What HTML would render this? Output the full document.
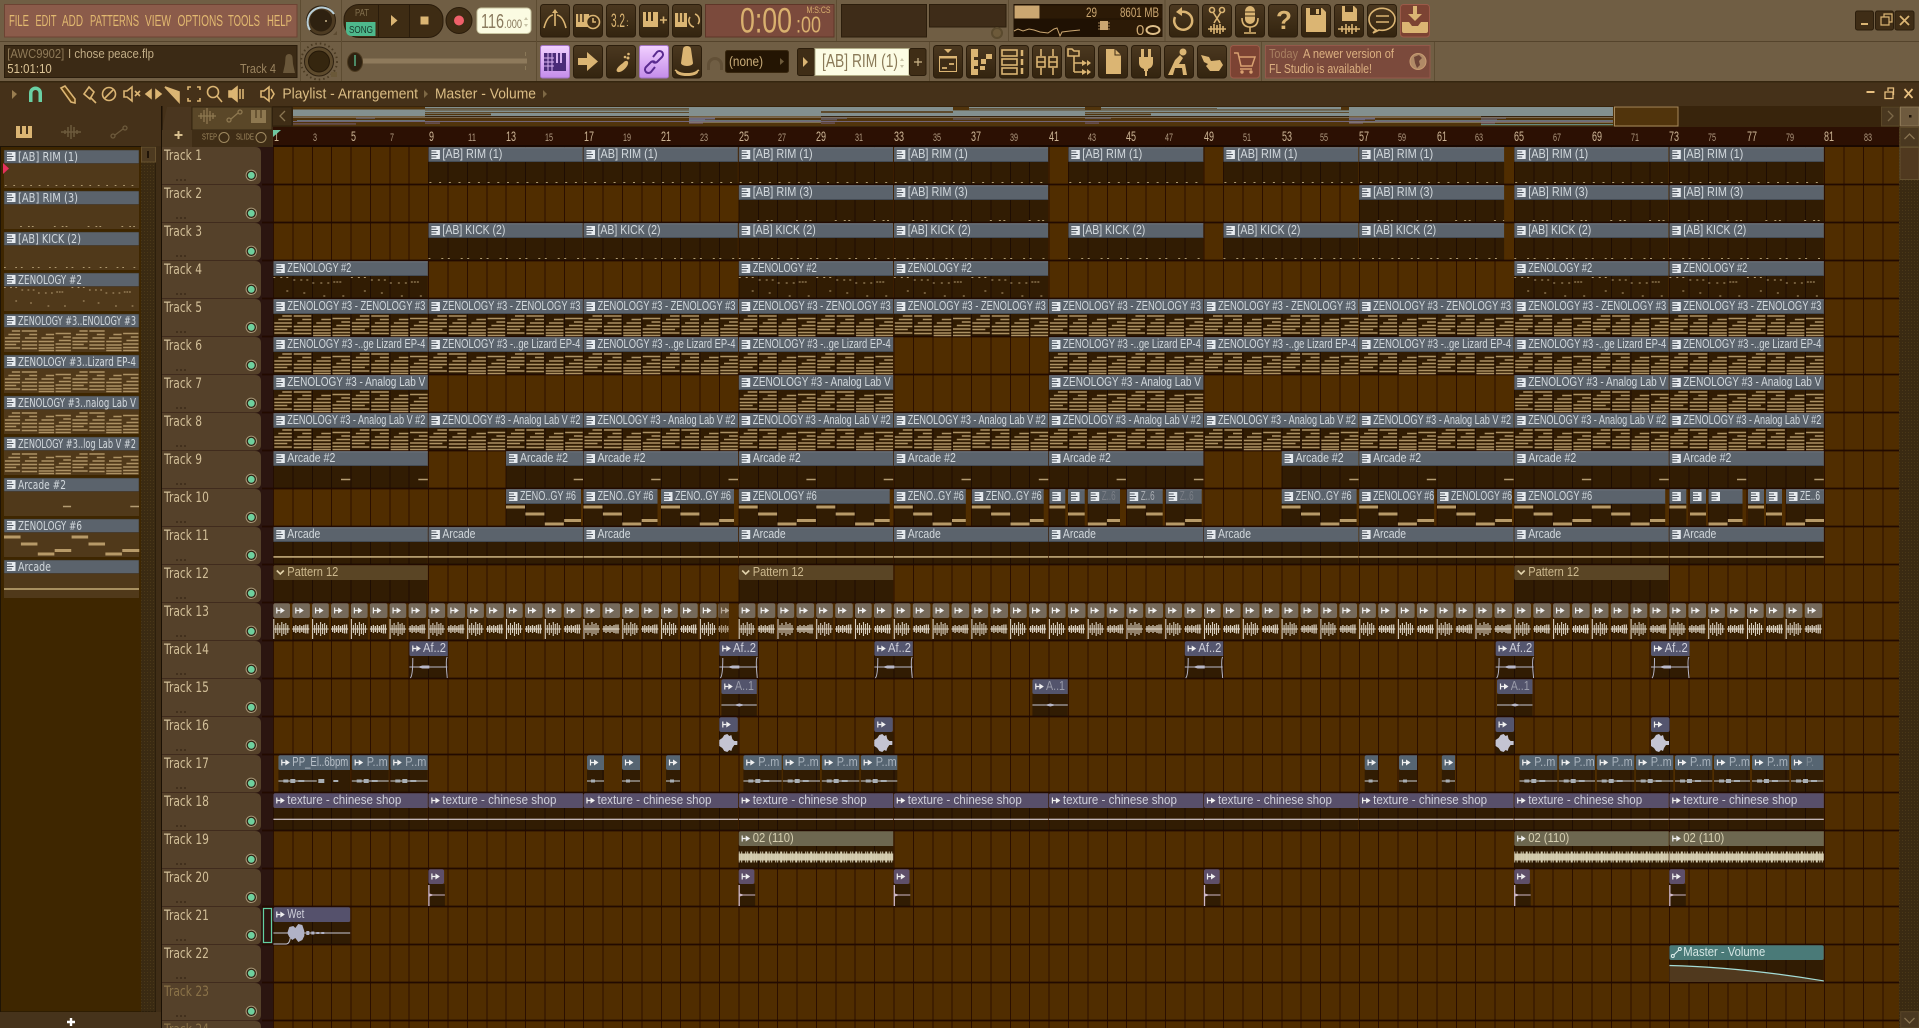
<!DOCTYPE html>
<html><head><meta charset="utf-8"><title>FL Studio - Playlist</title>
<style>
html,body{margin:0;padding:0;background:#3f2700;overflow:hidden}
svg{display:block;font-family:"Liberation Sans",sans-serif}
text{white-space:pre}
.t,.tr{font-family:"DejaVu Sans","Liberation Sans",sans-serif}
.t{font-size:12.500px;fill:#d2d8dc}
.d{fill:#9a9caa}
.p{fill:#cfd0da}
.y{fill:#d6cfb0}
.o{fill:#cdb98e}
.tr{font-size:14.500px;fill:#d2bf98}
.m{font-size:16px;fill:#e2b970}
.rb{font-size:14px;fill:#cdb595}
.rs{font-size:11px;fill:#b09a80}
.i{fill:#dbb573}
.s{fill:none;stroke:#dbb573;stroke-width:1.6}
</style></head><body>
<svg xmlns="http://www.w3.org/2000/svg" width="1919" height="1028" viewBox="0 0 1919 1028">
<defs>
<linearGradient id="bg" x1="0" y1="0" x2="0" y2="1"><stop offset="0" stop-color="#4b3820"/><stop offset="1" stop-color="#33240f"/></linearGradient>
<linearGradient id="gp" x1="0" y1="0" x2="0" y2="1"><stop offset="0" stop-color="#f2d0ff"/><stop offset="1" stop-color="#c48cea"/></linearGradient>
<g id="bt"><rect x=".5" y=".5" width="29" height="32.5" rx="3" fill="url(#bg)" stroke="#2c1e0c"/></g>
<pattern id="tex" width="3" height="3" patternUnits="userSpaceOnUse"><rect width="3" height="3" fill="#3a2a12"/><rect width="1" height="1" fill="#4a3818"/></pattern>
<g id="th"><path d="M162 0H255Q261 0 261 6V32Q261 37.5 255 37.5H162Z" fill="#55412a"/><circle cx="251.3" cy="28.3" r="5.2" fill="#2f2313" stroke="#a89878" stroke-width="1"/><circle cx="251.3" cy="28.3" r="3.4" fill="#6fd09e"/><path d="M176 33h2m2 0h2m2 0h2" stroke="#2e2010" stroke-width="1"/></g>
<g id="pi"><rect x="3" y="3" width="8.5" height="9" fill="#e6eaee"/><path d="M3 5h5M3 7.5h6.5M3 10h5" stroke="#4a525c" stroke-width="1"/></g>
<g id="ai"><path d="M3.5 4.5v6M4 7.5h3" stroke="#f0f0f0" stroke-width="1.2" fill="none"/><path d="M7 4.5l4.5 3-4.5 3z" fill="#f0f0f0"/></g>
<rect id="b" y="15" width="400" height="22" fill="rgba(18,12,6,.5)"/>
<g id="cs"><use href="#b"/><rect y=".3" width="400" height="14.7" rx="2" fill="#5b636c"/><rect y=".3" width="400" height="1" fill="#6e767f"/><rect y="14" width="400" height="1" fill="#454c55"/><use href="#pi"/></g>
<path id="n1" d="M1 35.5H155" stroke="#b09a70" stroke-dasharray="2 7.7"/>
<path id="n2" d="M18.5 35.5H155" stroke="#b09a70" stroke-dasharray="2 7 2 2.5 2 23.28"/>
<path id="n3" d="M0 35.5H155" stroke="#b09a70" stroke-dasharray="2 10.9 2 4.5"/>
<path id="nz" d="M0 16.5h2m5 0h2m4 0h2m5 2.5h2m5 0h2m4 0h2m4 3h2m6 0h2m5 0h2m4-1h2m1 0h2m1 0h2M13 30h2m15 2h2m18 3h2m17 0h2" stroke="#b49c72" fill="none"/>
<g id="n4"><use href="#nz"/><use href="#nz" x="77.55"/></g>
<path id="ns" d="M9 17H18.5M5 20.500H18.5M1 24H18.500M1 27.500H18.500M1 30.500H14M1 34H18.500M20.400 17H38M29 20.500H38M24 24H38M20.400 27.500H38M20.400 31H38M20.400 34.500H38M48 20.500H57.500M43 24H57.500M39.800 27.500H57.500M39.800 31H57.500M39.800 34H57.500M39.800 36.500H57.500M59.200 19.500H76.800M68 23H76.800M63 26.500H76.800M59.200 30H76.800M59.200 33.500H76.800M59.200 36.500H76.800" stroke="#ad9264" stroke-width="1.6" fill="none"/>
<g id="n5"><use href="#ns"/><use href="#ns" x="77.55"/></g>
<path id="n9" d="M67.7 28.5H77M145 28.5H155" stroke="#b49c72" stroke-width="1.6"/>
<g id="n6" fill="#b79a68"><rect y="16.5" width="19" height="3"/><rect x="19.4" y="23.5" width="19" height="3"/><rect x="38.8" y="33.5" width="19" height="3"/><rect x="58.2" y="30" width="19" height="3"/><rect x="77.6" y="16.5" width="19" height="3"/><rect x="97" y="23.5" width="19" height="3"/><rect x="116.4" y="33.5" width="19" height="3"/><rect x="135.8" y="30" width="19.5" height="3"/></g>
<g id="c1"><use href="#cs"/><use href="#n1"/></g>
<g id="c2"><use href="#cs"/><use href="#n2"/></g>
<g id="c3"><use href="#cs"/><use href="#n3"/></g>
<g id="c4"><use href="#cs"/><use href="#n4"/></g>
<g id="c5"><use href="#cs"/><use href="#n5"/></g>
<g id="c9"><use href="#cs"/><use href="#n9"/></g>
<g id="c6"><use href="#cs"/><use href="#n6"/></g>
<g id="c11"><use href="#cs"/><rect y="29" width="400" height="1.8" fill="#b39b6e"/></g>
<g id="c12"><use href="#b"/><rect y=".3" width="400" height="14.7" rx="2" fill="#5a4525"/><path d="M3.5 5.5l3.5 3.5 3.5-3.5" fill="none" stroke="#e2d2aa" stroke-width="1.6"/></g>
<g id="w13"><rect y=".3" width="16.7" height="14.7" rx="2" fill="#75695a"/><use href="#ai"/><rect y="15" width="17" height="22" fill="rgba(18,12,6,.35)"/><path d="M.5 16V36M0 26H16.5M2.500 22v8M4.500 20v12M6.500 22v8M8.500 19v14M10.500 21v10M12.500 20v12M14.500 22v8" stroke="#d8cfbf" stroke-width="1.100" fill="none"/></g>
<g id="w13b"><rect y=".3" width="17.6" height="14.7" rx="2" fill="#75695a"/><use href="#ai"/><rect y="15" width="18" height="22" fill="rgba(18,12,6,.35)"/><path d="M0 26H17M1.5 23v6M3.500 22v8M5.500 23v6M7.500 22v8M9.500 23v6M11.500 22v8M13.500 21.500v9M15.500 21.500v9" stroke="#d8cfbf" stroke-width="1.300" fill="none"/></g>
<g id="c14"><use href="#b"/><rect y=".3" width="400" height="14.7" rx="2" fill="#55566f"/><use href="#ai"/><path d="M0 26H38M1 37Q3.500 35 3.500 17M38 16Q36 18 38 37" fill="none" stroke="#b8b8ca"/><path d="M8 26L13 24.500H20V27.500H13Z" fill="#b8b8ca"/></g>
<g id="c15"><use href="#b"/><rect y=".3" width="400" height="14.7" rx="2" fill="#53546c"/><use href="#ai"/><path d="M0 26H36" stroke="#c8c8d4"/><path d="M12 26l6-1.500 6 1.500-6 1.500z" fill="#b8b8ca"/></g>
<g id="c16"><rect y=".3" width="18.500" height="14.700" rx="2" fill="#54556e"/><use href="#ai"/><rect y="15" width="19" height="22" fill="rgba(18,12,6,.5)"/><path d="M0 26H18" stroke="#c4c4d2"/><path d="M0 23L3 21L5 18L8 17L10 19L12 18L13 22L15 24H18V28H15L13 31L12 34L10 33L8 35L5 34L3 31L0 29Z" fill="#c4c4d2"/></g>
<g id="c17"><use href="#b"/><rect y=".3" width="400" height="14.7" rx="2" fill="#566572"/><use href="#ai"/><path d="M0 26H38.500" stroke="#ccd0d4"/><path d="M5 24.500h5v3h-5zM12 24h5v4h-5zM20 25h6v2h-6z" fill="#a8aeb4"/></g>
<g id="c17s"><rect y=".3" width="400" height="14.700" rx="2" fill="#566572"/><use href="#ai"/><rect y="15" width="20" height="22" fill="rgba(18,12,6,.5)"/><path d="M0 26H20" stroke="#ccd0d4"/><path d="M4 24.500h4v3h-4z" fill="#a8aeb4"/></g>
<g id="c18"><use href="#b"/><rect y=".3" width="400" height="14.7" rx="2" fill="#584f6a"/><use href="#ai"/><rect y="25.700" width="400" height="1.200" fill="#d4c8cc"/></g>
<g id="c19"><use href="#b"/><rect y=".3" width="400" height="14.7" rx="2" fill="#6d6750"/><use href="#ai"/><rect y="22.500" width="155" height="7" fill="#cfc6a8"/><path d="M0 26H155" stroke="#d6ceb2" stroke-width="11" stroke-dasharray="1 1.500 1 3 1 1 1 2 2 1.500"/></g>
<g id="c20"><rect y=".3" width="15.700" height="14.700" rx="2" fill="#5e4f6a"/><use href="#ai"/><rect y="15" width="16.500" height="22" fill="rgba(18,12,6,.5)"/><path d="M.5 16V37" stroke="#d0b8c8" stroke-width="1.300"/><path d="M1 24.500L6 26L1 27.500Z" fill="#d0b8c8"/><path d="M1 26H16.500" stroke="#d0b8c8"/></g>
</defs>

<!-- top toolbar -->
<rect width="1919" height="82" fill="#705e44"/>
<path d="M0 41.500H1919M0 81.500H1919" stroke="#55442c" stroke-width="1"/>
<rect y="81" width="1919" height="1.500" fill="#35260f"/>
<path d="M300.500 0V81M341.500 0V81M536.500 0V81M836.500 0V41M1008.500 0V41M1165 0V41M929.500 42V81M1261.500 42V81M1434.500 42V81" stroke="#5d4c32"/>
<rect x="4.500" y="4.500" width="292.500" height="32.500" fill="#8b5b4a" stroke="#6d4333"/>
<g class="m">
<text x="9" y="26" textLength="20" lengthAdjust="spacingAndGlyphs">FILE</text>
<text x="35.500" y="26" textLength="21" lengthAdjust="spacingAndGlyphs">EDIT</text>
<text x="62" y="26" textLength="21" lengthAdjust="spacingAndGlyphs">ADD</text>
<text x="90" y="26" textLength="49" lengthAdjust="spacingAndGlyphs">PATTERNS</text>
<text x="145" y="26" textLength="26" lengthAdjust="spacingAndGlyphs">VIEW</text>
<text x="177.500" y="26" textLength="45.500" lengthAdjust="spacingAndGlyphs">OPTIONS</text>
<text x="228" y="26" textLength="32" lengthAdjust="spacingAndGlyphs">TOOLS</text>
<text x="267" y="26" textLength="25" lengthAdjust="spacingAndGlyphs">HELP</text>
</g>
<rect x="4.500" y="45.500" width="292.500" height="32" fill="#3b2a15" stroke="#2a1c0b"/>
<text x="7.300" y="58" font-size="12.500" fill="#8f7a58" textLength="57" lengthAdjust="spacingAndGlyphs">[AWC9902]</text>
<text x="68" y="58" font-size="12.500" fill="#c2ad86" textLength="86" lengthAdjust="spacingAndGlyphs">I chose peace.flp</text>
<text x="7.300" y="73" font-size="12.500" fill="#dcc496" textLength="44.500" lengthAdjust="spacingAndGlyphs">51:01:10</text>
<text x="240" y="73" font-size="12.500" fill="#9c8560" textLength="36" lengthAdjust="spacingAndGlyphs">Track 4</text>
<path d="M283 73h12l-2-9-.5-6.500a3.500 3.500 0 0 0-7 0L285 64z" fill="#6a573a"/>
<!-- knobs -->
<circle cx="321" cy="20.500" r="14.500" fill="#4d3b22" stroke="#2d2010"/>
<circle cx="321" cy="20.500" r="11" fill="#2e2110"/>
<path d="M310 30A14 14 0 1 1 334 14" fill="none" stroke="#b9cfd8" stroke-width="2"/>
<circle cx="326" cy="21" r="1" fill="#c8b48c"/>
<path d="M337 35l-4 0 4-4z" fill="#5c4a30"/>
<circle cx="319" cy="61.500" r="18" fill="none" stroke="#4a3a22" stroke-width="2" stroke-dasharray="1.500 3"/>
<circle cx="319" cy="61.500" r="14.500" fill="#5d4a2c" stroke="#2d2010"/>
<circle cx="319" cy="61.500" r="10.500" fill="#35260f" stroke="#241808"/>
<rect x="331" y="72" width="6" height="5" fill="#6a5838"/>
<!-- pat/song -->
<rect x="344" y="4.500" width="99" height="33" rx="15" fill="#3e2c14" stroke="#2a1c0b"/>
<path d="M378.500 4.500V37.500M409.500 4.500V37.500" stroke="#2a1c0b"/>
<text x="355" y="16" font-size="10" fill="#83704e" textLength="14" lengthAdjust="spacingAndGlyphs">PAT</text>
<path d="M346 22H375.500V36H352Q346 36 346 30Z" fill="#4eb98c"/>
<text x="349" y="33" font-size="10.500" fill="#17372a" textLength="24" lengthAdjust="spacingAndGlyphs">SONG</text>
<path d="M391 15l6.500 5.500-6.500 5.500z" class="i"/>
<rect x="420.500" y="16.500" width="8" height="8" class="i"/>
<circle cx="459" cy="20.500" r="13" fill="#3e2c14" stroke="#2a1c0b"/>
<circle cx="459" cy="20.500" r="5" fill="#f0606a"/>
<rect x="477" y="8" width="54" height="25.500" rx="4" fill="#fbfbe2" stroke="#c8c4a0"/>
<text x="481" y="28" font-size="20" fill="#8a7a5e" textLength="23" lengthAdjust="spacingAndGlyphs">116</text>
<text x="504" y="28" font-size="12" fill="#8a7a5e" textLength="18" lengthAdjust="spacingAndGlyphs">.000</text>
<path d="M526 17l-2 3h4zM524 24h4l-2 3z" fill="#c8c4a8"/>
<!-- speed slider -->
<rect x="362" y="58.500" width="165" height="5" fill="#8e7a5c"/>
<ellipse cx="355" cy="62" rx="7.500" ry="9.500" fill="#2e2110" stroke="#4c3a20"/>
<path d="M355 55v11" stroke="#5fd0a0" stroke-width="1.200"/>
<path d="M525.500 52v4M525.500 66v4" stroke="#8a7858"/>
<!-- row1 buttons -->
<use href="#bt" x="540" y="4"/><use href="#bt" x="573" y="4"/><use href="#bt" x="606" y="4"/><use href="#bt" x="639" y="4"/><use href="#bt" x="672" y="4"/>
<use href="#bt" x="1169" y="4"/><use href="#bt" x="1202" y="4"/><use href="#bt" x="1235" y="4"/><use href="#bt" x="1268" y="4"/><use href="#bt" x="1301" y="4"/><use href="#bt" x="1334" y="4"/><use href="#bt" x="1367" y="4"/>
<rect x="1400.500" y="4.500" width="29" height="32.500" rx="3" fill="#7c4333" stroke="#9b5a48"/>
<g transform="translate(555,20)"><path class="s" d="M-11 8Q-8-4-2-5M11 8Q8-4 2-5M0-10V6"/><path class="i" d="M-3-7h6l-3-4z"/></g>
<g transform="translate(588,20)"><path class="i" d="M-12-6h13v13h-13z"/><path d="M-9-6v8M-5-6v8" stroke="#3f2d16" stroke-width="1.500"/><circle cx="5" cy="2" r="6.500" fill="#3f2d16" stroke="#dbb573" stroke-width="1.600"/><path class="s" d="M5-2v4h3"/></g>
<text x="611" y="27" font-size="19" class="i" textLength="14" lengthAdjust="spacingAndGlyphs">3.2</text><text x="626" y="26" font-size="10" class="i">:</text>
<g transform="translate(654,20)"><path class="i" d="M-11-8h15v15h-15z"/><path d="M-7-8v9M-2-8v9" stroke="#3f2d16" stroke-width="2"/><path class="s" d="M6 0h7M9.500-3.500v7"/></g>
<g transform="translate(687,20)"><path class="i" d="M-12-7h12v14h-12z"/><path d="M-8-7v9M-4-7v9" stroke="#3f2d16" stroke-width="1.600"/><path class="s" d="M8-6a6.500 6.500 0 0 1 3 10M7 7a6.500 6.500 0 0 1-4-10"/></g>
<g transform="translate(1184,20)"><path d="M-3-8a9 9 0 1 1-6 5" fill="none" stroke="#dbb573" stroke-width="2.500"/><path class="i" d="M-2-13v9l-6-4z"/></g>
<g transform="translate(1217,20)"><circle cx="-5" cy="-10" r="2.500" class="s"/><circle cx="5" cy="-10" r="2.500" class="s"/><path class="s" d="M-4-8L3 3M4-8L-3 3"/><path class="s" d="M-9 9H9M-6 6v6M-3 4v10M0 5v8M3 4v10M6 6v6"/></g>
<g transform="translate(1250,20)"><rect x="-5" y="-14" width="10" height="18" rx="5" class="i"/><path class="s" d="M-8-2q0 9 8 9t8-9M0 7v5M-6 13h12"/><path d="M-5-8h10M-5-4h10" stroke="#3f2d16"/></g>
<text x="1276" y="29" font-size="26" font-weight="bold" class="i">?</text>
<g transform="translate(1316,20)"><path class="i" d="M-10-12H6L10-8V12H-10Z"/><rect x="-6" y="-12" width="11" height="7" fill="#3f2d16"/><rect x="0" y="-11" width="3" height="5" class="i"/></g>
<g transform="translate(1349,20)"><path class="i" d="M-7-14H5L8-11V1H-7Z"/><rect x="-4" y="-14" width="8" height="6" fill="#3f2d16"/><path class="s" d="M-11 9H11M-7 6v6M-3 4v10M0 6v6M3 4v10M7 6v6"/></g>
<g transform="translate(1382,19)"><path class="s" d="M-6 11Q-13 7-13 0A13 11 0 1 1-3 11L-9 14Z" stroke-width="1.800"/><path class="s" d="M-6-3H7M-6 3H7"/></g>
<g transform="translate(1415,20)"><path class="i" d="M-2-14h4v8h5L0 1-7-6h5z"/><path class="i" d="M-13 2h7l3 4H3l3-4h7v9a2 2 0 0 1-2 2H-11a2 2 0 0 1-2-2z"/></g>
<!-- time -->
<rect x="705.500" y="4.500" width="128.500" height="32.500" fill="#7b4a3c" stroke="#5f3628"/>
<text x="740" y="32.500" font-size="35" fill="#d9b06e" textLength="52" lengthAdjust="spacingAndGlyphs">0:00</text>
<text x="796" y="32.500" font-size="23" fill="#d9b06e" textLength="25" lengthAdjust="spacingAndGlyphs">:00</text>
<text x="806.500" y="13" font-size="9.500" fill="#d9b06e" textLength="24" lengthAdjust="spacingAndGlyphs">M:S:CS</text>
<rect x="841.500" y="4.500" width="85" height="32.500" fill="#3e2c18" stroke="#2c1e0c"/>
<rect x="929.500" y="4.500" width="76.500" height="22.500" fill="#3e2c18" stroke="#2c1e0c"/>
<circle cx="997" cy="33" r="5" fill="#6d5a3a" stroke="#5a4a2e" stroke-width="2"/>
<!-- cpu -->
<rect x="1013.500" y="4" width="149" height="33" fill="#1f1103"/>
<rect x="1014.500" y="5.500" width="25" height="13" fill="#cba771"/>
<rect x="1040" y="5.500" width="65" height="13" fill="#2c1a06"/>
<rect x="1100" y="5.500" width="62" height="13" fill="#2c1a06"/>
<rect x="1100" y="19.500" width="62" height="17" fill="#2c1a06"/>
<text x="1086" y="17" font-size="14" fill="#cba771" textLength="11" lengthAdjust="spacingAndGlyphs">29</text>
<text x="1120" y="17" font-size="14" fill="#cba771" textLength="39" lengthAdjust="spacingAndGlyphs">8601 MB</text>
<text x="1136" y="35" font-size="15" fill="#cba771">0</text>
<path d="M1014 31l4-2 5 2 6-2 5 1 6 2 8 1 6-4 3-1 3 8 2-4 8-1 10-1" fill="none" stroke="#cba771"/>
<rect x="1100" y="21" width="8" height="9" fill="#cba771"/>
<path d="M1098 23h12M1098 26h12M1098 29h12" stroke="#cba771" stroke-width=".7"/>
<ellipse cx="1153" cy="30" rx="6.500" ry="4" fill="none" stroke="#e0c08a" stroke-width="2"/>
<!-- row2 buttons -->
<rect x="540.500" y="45.500" width="29" height="32.500" rx="2" fill="url(#gp)" stroke="#a070c0"/>
<g transform="translate(555,62)"><path d="M-11-9H11V9H-11Z" fill="#4a2b78"/><path d="M-11-4H-1M-11 0H-1M-11 4H-1M-7-9V9M-3-9V9" stroke="#d8b0f0"/><path d="M2-9v10M6-9v10" stroke="#d8b0f0" stroke-width="2"/></g>
<use href="#bt" x="573" y="45"/><use href="#bt" x="606" y="45"/>
<rect x="639.500" y="45.500" width="29" height="32.500" rx="2" fill="url(#gp)" stroke="#a070c0"/>
<use href="#bt" x="672" y="45"/>
<path class="i" d="M578 58h9v-6l11 9.500-11 9.500v-6h-9z"/>
<g transform="translate(621,62)"><path class="i" d="M2 1c2-3 6-3 5 1s-7 9-10 8-1-5 5-9z"/><circle cx="7" cy="-4" r="1.500" class="i"/><circle cx="7.500" cy="-8" r="1.300" class="i"/><circle cx="4" cy="-5" r="1.300" class="i"/></g>
<g transform="translate(654,62)" fill="none" stroke="#5a2b90" stroke-width="2"><path d="M-1-5l4-5a3.500 3.500 0 0 1 5 5l-5 5a3.500 3.500 0 0 1-4 0"/><path d="M1 5l-4 5a3.500 3.500 0 0 1-5-5l5-5a3.500 3.500 0 0 1 4 0"/></g>
<g transform="translate(687,62)"><path class="i" d="M-4-13a4 3 0 0 1 8 0l2 14a6 3 0 0 1-12 0z"/><path class="s" d="M-12 8q12 9 24 0"/><path class="i" d="M-11 7a11 4 0 0 0 22 0l0 3a11 4 0 0 1-22 0z"/></g>
<g transform="translate(715,62)" opacity=".28"><path d="M-8 3a8 8 0 0 1 16 0v5h-3v-5a5 5 0 0 0-10 0v5h-3z" fill="#3f2d16"/></g>
<rect x="725.500" y="50.500" width="63" height="22" rx="2" fill="#241503" stroke="#38270f"/>
<text x="729" y="66" font-size="14" fill="#c9ac78" textLength="34" lengthAdjust="spacingAndGlyphs">(none)</text>
<path d="M780 58l4 3.500-4 3.500z" fill="#6d5a3a"/>
<rect x="797.500" y="48.500" width="17" height="27" rx="2" fill="#3f2d16" stroke="#2c1e0c"/>
<path d="M803 57l5 5-5 5z" class="i"/>
<rect x="815" y="48.500" width="94" height="27" fill="#fcfce4" stroke="#b3ae88"/>
<text x="822" y="67" font-size="18" fill="#8a7a58" textLength="76" lengthAdjust="spacingAndGlyphs">[AB] RIM (1)</text>
<path d="M902 58l-2 3h4zM900 65h4l-2 3z" fill="#c8c4a8"/>
<rect x="909.500" y="48.500" width="16.500" height="27" rx="2" fill="#3f2d16" stroke="#2c1e0c"/>
<path d="M914 62h8M918 58v8" stroke="#cdb78a" stroke-width="1.200"/>
<use href="#bt" x="933" y="45"/><use href="#bt" x="966" y="45"/><use href="#bt" x="999" y="45"/><use href="#bt" x="1032" y="45"/><use href="#bt" x="1065" y="45"/><use href="#bt" x="1098" y="45"/><use href="#bt" x="1131" y="45"/><use href="#bt" x="1164" y="45"/><use href="#bt" x="1197" y="45"/>
<rect x="1230.500" y="45.500" width="29" height="32.500" rx="3" fill="#7c4333" stroke="#9b5a48"/>
<g transform="translate(948,62)"><path class="i" d="M-4-13h8l-4 4z"/><rect x="-9" y="-6" width="18" height="16" class="i"/><rect x="-8" y="-4" width="16" height="13" fill="#3f2d16"/><path d="M-9-4H9" stroke="#dbb573"/><path d="M-6 6h5M1 2h5" stroke="#dbb573" stroke-width="1.800"/></g>
<g transform="translate(981,62)"><path class="i" d="M-10-13h7v8h-4v3h4v6h-4v3h4v6h-7zM0-3h5v5H0zM5-8h6v5H5zM-1 4h5v4h-5z"/></g>
<g transform="translate(1014,62)"><rect x="-12" y="-12" width="15" height="6" class="s"/><rect x="-12" y="-3" width="15" height="6" class="s"/><rect x="-12" y="6" width="15" height="6" class="s"/><path d="M8-12v6M8-3v6M8 6v6" stroke="#dbb573" stroke-width="2.500"/></g>
<g transform="translate(1047,62)"><path class="s" d="M-6-13v7M-6 6v7M6-13v7M6 6v7"/><rect x="-10" y="-5" width="8" height="10" class="s"/><rect x="2" y="-5" width="8" height="10" class="s"/><path class="s" d="M-10 0h8M2 0h8"/></g>
<g transform="translate(1080,62)"><path class="s" d="M-12-13h4l2 2h5v5h-11zM-6-6V10M-6 1H2M-6 10H2"/><path class="i" d="M2-2l5 3-5 3zM2 7l5 3-5 3zM7-2l4 3-4 3zM7 7l4 3-4 3z"/></g>
<g transform="translate(1113,62)"><path class="i" d="M-7-13H2L8-7V12H-7Z"/><path d="M2-13V-7H8" fill="none" stroke="#3f2d16"/></g>
<g transform="translate(1146,62)"><path class="i" d="M-7-5H7V1A6 6 0 0 1 2 7V9H-2V7A6 6 0 0 1-7 1Z"/><rect x="-5" y="-13" width="3" height="8" class="i"/><rect x="2" y="-13" width="3" height="8" class="i"/><path d="M0 9v5" stroke="#dbb573" stroke-width="2"/></g>
<g transform="translate(1179,62)"><circle cx="4" cy="-10" r="3.500" class="i"/><path class="i" d="M-4-2L1-7l3 3L0 2h6l2 11H4L3 6H-4l-2 7h-5z"/></g>
<g transform="translate(1212,62)"><path class="i" d="M-11-7L-3-5-1-1 8-2 11 3 7 9-2 9-6 4-4 2-8 0z"/></g>
<g transform="translate(1245,62)"><path fill="none" stroke="#d8a070" stroke-width="1.500" d="M-11-9h4l3 13h11l3-9H-6M-5 7h12"/><circle cx="-3" cy="10" r="1.700" fill="#d8a070"/><circle cx="6" cy="10" r="1.700" fill="#d8a070"/></g>
<rect x="1265.500" y="45.500" width="164.500" height="32.500" fill="#7b4a3c" stroke="#94584a"/>
<text x="1269" y="58" font-size="12.500" fill="#a87f60" textLength="29" lengthAdjust="spacingAndGlyphs">Today</text>
<text x="1303" y="58" font-size="12.500" fill="#dcb080" textLength="91" lengthAdjust="spacingAndGlyphs">A newer version of</text>
<text x="1269" y="73" font-size="12.500" fill="#dcb080" textLength="103" lengthAdjust="spacingAndGlyphs">FL Studio is available!</text>
<circle cx="1418" cy="61.500" r="8" fill="#b08a66" stroke="#c89c72"/>
<path d="M1414 57l5-2 3 3-3 3 1 4-3 3-2-5z" fill="#6f4638"/>
<!-- window buttons -->
<rect x="1855.500" y="11" width="18" height="19" rx="2" fill="#3f2d16" stroke="#2c1e0c"/>
<rect x="1875.500" y="11" width="18" height="19" rx="2" fill="#3f2d16" stroke="#2c1e0c"/>
<rect x="1895" y="11" width="19" height="19" rx="2" fill="#3f2d16" stroke="#2c1e0c"/>
<path d="M1861 24h7" stroke="#dbb573" stroke-width="2"/>
<path d="M1881 17h8v8h-8zM1884 17v-3h8v8h-3" fill="none" stroke="#dbb573" stroke-width="1.200"/>
<path d="M1900 16l9 9M1909 16l-9 9" stroke="#dbb573" stroke-width="1.800"/>

<!-- title bar -->
<rect y="82.500" width="1919" height="25" fill="#453119"/>
<rect y="106" width="273" height="41" fill="#453119"/>
<path d="M12 90l5 4-5 5z" fill="#9a7e50"/>
<path d="M29 102V93a6.500 6.500 0 0 1 13 0v9h-3.500V93a3 3 0 0 0-6 0v9z" fill="#6ad0a4"/>
<g fill="none" stroke="#dbb573" stroke-width="1.600"><path d="M61 88l4-2 10 13 0 4-4-1z" fill="#5a3c10"/><path d="M84 94l5-7 5 5-4 7zM90 97l6 6"/><circle cx="109" cy="94" r="6.500"/><path d="M105 98l8-8"/><path d="M124 91h3l5-4v14l-5-4h-3zM135 91l5 5M140 91l-5 5"/><path d="M146 94l5-4v8zM161 94l-5-4v8z" fill="#dbb573"/><path d="M165 87l14 5v10z" fill="#dbb573"/><path d="M188 90v-3h3M197 87h3v3M200 98v3h-3M191 101h-3v-3"/><circle cx="213" cy="92" r="5.500"/><path d="M217 96l5 6"/><path d="M229 91h3l5-4v14l-5-4h-3z" fill="#dbb573"/><path d="M240 89v10M243 89v10"/><path d="M261 91h3l5-4v14l-5-4h-3zM271 89l3 5-3 5"/></g>
<text x="282.400" y="98.500" font-size="15" fill="#dbbd85" textLength="135.600" lengthAdjust="spacingAndGlyphs">Playlist - Arrangement</text>
<path d="M424 90l4 4-4 4z" fill="#7e6844"/>
<text x="435" y="98.500" font-size="15" fill="#dbbd85" textLength="101" lengthAdjust="spacingAndGlyphs">Master - Volume</text>
<path d="M543 90l4 4-4 4z" fill="#7e6844"/>
<path d="M1866.500 92h8" stroke="#e8c080" stroke-width="2"/>
<path d="M1885 92h8v6.500h-8z" fill="none" stroke="#e8c080" stroke-width="1.300"/><path d="M1888 91v-3h5.500v7" fill="none" stroke="#e8c080" stroke-width="1.300"/>
<path d="M1904.500 89l8 9M1912.500 89l-8 9" stroke="#e8c080" stroke-width="1.800"/>

<!-- minimap row -->
<rect x="272" y="106" width="1647" height="21" fill="#38240c"/>
<rect x="272.500" y="107" width="19.500" height="19" fill="#3f2d16" stroke="#2c1e0c"/>
<path d="M285 111l-5 5 5 5" fill="none" stroke="#8a7552" stroke-width="1.300"/>
<rect x="293" y="107" width="1322" height="19" fill="#51340c"/>
<rect x="1614.500" y="107" width="63.500" height="19" fill="#51340c" stroke="#a8895a"/>
<g fill="none" stroke-width=".9">
<path stroke="#83908f" d="M425 107.500H953M969 107.500H1085M1101 107.500H1341M1349 107.500H1613M689 108.300H953M1217 108.300H1341M1349 108.300H1613M425 109.100H953M969 109.100H1085M1101 109.100H1341M1349 109.100H1613M293 110H425M689 110H953M1349 110H1613M293 110.800H1613M293 111.600H821M953 111.600H1613M293 112.400H425M689 112.400H821M953 112.400H1085M1349 112.400H1613M293 113.200H1613M293 114.100H425M491 114.100H1085M1151 114.100H1613M293 114.900H425M491 114.900H1085M1151 114.900H1613M293 115.700H1613"/>
<path stroke="#2b1804" d="M293 116.500H689M821 116.500H1349M1481 116.500H1613"/>
<path stroke="#6e5a3a" d="M293 116.500H425M689 116.500H821M1349 116.500H1481"/>
<path stroke="#8b7d68" d="M293 117.300H1613"/>
<path stroke="#6e6a80" d="M356 118.200H375M689 118.200H715M821 118.200H847M1085 118.200H1111M1349 118.200H1375M1481 118.200H1506M689 119H715M953 119H980M1349 119H1375M689 119.800H705M821 119.800H837M1349 119.800H1365M1481 119.800H1497"/>
<path stroke="#6e7e88" d="M297 120.600H425M689 120.600H821M1375 120.600H1613"/>
<path stroke="#776c88" d="M293 121.400H1613"/>
<path stroke="#8a846a" d="M689 122.300H821M1349 122.300H1613"/>
<path stroke="#7a6688" d="M425 123.100H440M689 123.100H703M821 123.100H835M1085 123.100H1099M1349 123.100H1363M1481 123.100H1495M293 123.900H356"/>
<path stroke="#6da8a4" d="M1481 124.700H1613"/>
</g>
<rect x="1881.500" y="107" width="18" height="19" fill="#4a3820" stroke="#5a4728"/>
<path d="M1888 111l5 5-5 5" fill="none" stroke="#7c6848" stroke-width="1.300"/>
<rect x="1900.500" y="107" width="18.500" height="19" fill="#6e5a3e" stroke="#8a7554"/>
<rect x="1909" y="115" width="2.500" height="2.500" fill="#1f1408"/>

<!-- left panel top -->
<path d="M167 107L162 130H191V107Z" fill="#4b3820" opacity=".8"/>
<rect x="192" y="107" width="80" height="23" fill="#5a4728" stroke="#33240f"/>
<g stroke="#8e7850" fill="none" stroke-width="1.300"><path d="M198 116h18M201 113v6M204 110v12M207 108v16M210 111v10M213 113v6"/><circle cx="229" cy="120" r="2"/><circle cx="240" cy="112" r="2"/><path d="M231 119l7-6"/></g>
<path d="M251 110h15v13h-15z" fill="#8e7850"/><path d="M256 110v8M261 110v8" stroke="#5a4728" stroke-width="1.500"/>
<g transform="translate(24,132)"><path d="M-8-6H8V6H-8z" class="i"/><path d="M-3-6V2M3-6V2" stroke="#45321a" stroke-width="2"/></g>
<g transform="translate(71,132)" stroke="#6d5a3c" fill="none" stroke-width="1.500"><path d="M-10 0H10M-6-2v4M-3-5v10M0-7v14M3-5v10M6-2v4"/></g>
<g transform="translate(119,132)" stroke="#6d5a3c" fill="none" stroke-width="1.300"><circle cx="-6" cy="4" r="2"/><circle cx="6" cy="-4" r="2"/><path d="M-4 3L4-3"/></g>
<!-- picker panel -->
<rect x="0" y="146" width="141" height="866" fill="#3e2600"/>
<rect x="141" y="146" width="15" height="866" fill="url(#tex)"/>
<rect x=".5" y="146.500" width="155.500" height="865.500" fill="none" stroke="#1f1405"/>
<rect x="141.500" y="147" width="14" height="15" fill="#4d3a20" stroke="#67512e"/>
<rect x="147" y="151" width="2" height="7" fill="#1f1408"/>
<rect x="156" y="146" width="5" height="882" fill="#3f2d16"/>
<rect y="1012" width="161" height="16" fill="#46331b"/>
<path d="M71 1018v8M67 1022h8" stroke="#fff" stroke-width="2.400"/>
<rect x="161" y="106" width="1.500" height="922" fill="#1a1004"/>

<g class="t">
<g transform="translate(4,150)"><rect y="13" width="135" height="25" fill="#50391a"/><rect width="135" height="13.500" fill="#5b636c" stroke="#3a2c18" stroke-width=".5"/><use href="#pi" y="-1"/><text x="14" y="11" textLength="60" lengthAdjust="spacingAndGlyphs">[AB] RIM (1)</text><use href="#n1" transform="scale(.871,1)"/></g>
<g transform="translate(4,191)"><rect y="13" width="135" height="25" fill="#50391a"/><rect width="135" height="13.500" fill="#5b636c" stroke="#3a2c18" stroke-width=".5"/><use href="#pi" y="-1"/><text x="14" y="11" textLength="60" lengthAdjust="spacingAndGlyphs">[AB] RIM (3)</text><use href="#n2" transform="scale(.871,1)"/></g>
<g transform="translate(4,232)"><rect y="13" width="135" height="25" fill="#50391a"/><rect width="135" height="13.500" fill="#5b636c" stroke="#3a2c18" stroke-width=".5"/><use href="#pi" y="-1"/><text x="14" y="11" textLength="63" lengthAdjust="spacingAndGlyphs">[AB] KICK (2)</text><use href="#n3" transform="scale(.871,1)"/></g>
<g transform="translate(4,273)"><rect y="13" width="135" height="25" fill="#50391a"/><rect width="135" height="13.500" fill="#5b636c" stroke="#3a2c18" stroke-width=".5"/><use href="#pi" y="-1"/><text x="14" y="11" textLength="64" lengthAdjust="spacingAndGlyphs">ZENOLOGY #2</text><use href="#n4" transform="translate(0,-2) scale(.871,1)"/></g>
<g transform="translate(4,314)"><rect y="13" width="135" height="25" fill="#50391a"/><rect width="135" height="13.500" fill="#5b636c" stroke="#3a2c18" stroke-width=".5"/><use href="#pi" y="-1"/><text x="14" y="11" textLength="118" lengthAdjust="spacingAndGlyphs">ZENOLOGY #3..ENOLOGY #3</text><use href="#n5" transform="scale(.871,1)"/></g>
<g transform="translate(4,355)"><rect y="13" width="135" height="25" fill="#50391a"/><rect width="135" height="13.500" fill="#5b636c" stroke="#3a2c18" stroke-width=".5"/><use href="#pi" y="-1"/><text x="14" y="11" textLength="118" lengthAdjust="spacingAndGlyphs">ZENOLOGY #3..Lizard EP-4</text><use href="#n5" transform="scale(.871,1)"/></g>
<g transform="translate(4,396)"><rect y="13" width="135" height="25" fill="#50391a"/><rect width="135" height="13.500" fill="#5b636c" stroke="#3a2c18" stroke-width=".5"/><use href="#pi" y="-1"/><text x="14" y="11" textLength="118" lengthAdjust="spacingAndGlyphs">ZENOLOGY #3..nalog Lab V</text><use href="#n5" transform="scale(.871,1)"/></g>
<g transform="translate(4,437)"><rect y="13" width="135" height="25" fill="#50391a"/><rect width="135" height="13.500" fill="#5b636c" stroke="#3a2c18" stroke-width=".5"/><use href="#pi" y="-1"/><text x="14" y="11" textLength="118" lengthAdjust="spacingAndGlyphs">ZENOLOGY #3..log Lab V #2</text><use href="#n5" transform="scale(.871,1)"/></g>
<g transform="translate(4,478)"><rect y="13" width="135" height="25" fill="#50391a"/><rect width="135" height="13.500" fill="#5b636c" stroke="#3a2c18" stroke-width=".5"/><use href="#pi" y="-1"/><text x="14" y="11" textLength="48" lengthAdjust="spacingAndGlyphs">Arcade #2</text><use href="#n9" transform="scale(.871,1)"/></g>
<g transform="translate(4,519)"><rect y="13" width="135" height="25" fill="#50391a"/><rect width="135" height="13.500" fill="#5b636c" stroke="#3a2c18" stroke-width=".5"/><use href="#pi" y="-1"/><text x="14" y="11" textLength="64" lengthAdjust="spacingAndGlyphs">ZENOLOGY #6</text><use href="#n6" transform="scale(.871,1)"/></g>
<g transform="translate(4,560)"><rect y="13" width="135" height="25" fill="#50391a"/><rect width="135" height="13.500" fill="#5b636c" stroke="#3a2c18" stroke-width=".5"/><use href="#pi" y="-1"/><text x="14" y="11" textLength="33" lengthAdjust="spacingAndGlyphs">Arcade</text><rect y="28" width="135" height="2" fill="#a89060"/></g>
</g>
<path d="M3 163l6 5.500-6 5.500z" fill="#e6305c"/>

<!-- track header column and grid -->
<rect x="162" y="130" width="30" height="17" fill="#4b3820"/>
<path d="M174.500 135h8M178.500 131v8" stroke="#d8c08e" stroke-width="2"/>
<rect x="192" y="130" width="80" height="17" fill="#3f2d16"/>
<text x="202" y="139.500" font-size="8.500" fill="#a08a60" textLength="15" lengthAdjust="spacingAndGlyphs">STEP</text>
<circle cx="224" cy="137.500" r="5" fill="none" stroke="#a08a60"/>
<text x="236" y="139.500" font-size="8.500" fill="#a08a60" textLength="18" lengthAdjust="spacingAndGlyphs">SLIDE</text>
<circle cx="261" cy="137.500" r="5" fill="none" stroke="#a08a60"/>
<rect x="162" y="147" width="111" height="881" fill="#2b1510"/>
<rect x="273" y="127" width="1626" height="19" fill="#2c1003"/>
<rect x="273" y="145" width="1626" height="2" fill="#1a0800"/>
<rect x="273" y="147" width="1626" height="881" fill="#502d00"/>
<path d="M273 587.500H1899" stroke="#2b0f00" stroke-width="881" stroke-dasharray="1 18.390" shape-rendering="crispEdges"/>
<path d="M262 184.500H1899M262 222.500H1899M262 260.500H1899M262 298.500H1899M262 336.500H1899M262 374.500H1899M262 412.500H1899M262 450.500H1899M262 488.500H1899M262 526.500H1899M262 564.500H1899M262 602.500H1899M262 640.500H1899M262 678.500H1899M262 716.500H1899M262 754.500H1899M262 792.500H1899M262 830.500H1899M262 868.500H1899M262 906.500H1899M262 944.500H1899M262 982.500H1899M262 1020.500H1899" stroke="#220a00" stroke-width="1.800"/>
<!-- ruler -->
<g class="rb">
<text x="274" y="141" textLength="5" lengthAdjust="spacingAndGlyphs">1</text><text x="351" y="141" textLength="5" lengthAdjust="spacingAndGlyphs">5</text><text x="429" y="141" textLength="5" lengthAdjust="spacingAndGlyphs">9</text><text x="506" y="141" textLength="10" lengthAdjust="spacingAndGlyphs">13</text><text x="584" y="141" textLength="10" lengthAdjust="spacingAndGlyphs">17</text><text x="661" y="141" textLength="10" lengthAdjust="spacingAndGlyphs">21</text><text x="739" y="141" textLength="10" lengthAdjust="spacingAndGlyphs">25</text><text x="816" y="141" textLength="10" lengthAdjust="spacingAndGlyphs">29</text><text x="894" y="141" textLength="10" lengthAdjust="spacingAndGlyphs">33</text><text x="971" y="141" textLength="10" lengthAdjust="spacingAndGlyphs">37</text><text x="1049" y="141" textLength="10" lengthAdjust="spacingAndGlyphs">41</text><text x="1126" y="141" textLength="10" lengthAdjust="spacingAndGlyphs">45</text><text x="1204" y="141" textLength="10" lengthAdjust="spacingAndGlyphs">49</text><text x="1282" y="141" textLength="10" lengthAdjust="spacingAndGlyphs">53</text><text x="1359" y="141" textLength="10" lengthAdjust="spacingAndGlyphs">57</text><text x="1437" y="141" textLength="10" lengthAdjust="spacingAndGlyphs">61</text><text x="1514" y="141" textLength="10" lengthAdjust="spacingAndGlyphs">65</text><text x="1592" y="141" textLength="10" lengthAdjust="spacingAndGlyphs">69</text><text x="1669" y="141" textLength="10" lengthAdjust="spacingAndGlyphs">73</text><text x="1747" y="141" textLength="10" lengthAdjust="spacingAndGlyphs">77</text><text x="1824" y="141" textLength="10" lengthAdjust="spacingAndGlyphs">81</text>
</g>
<g class="rs">
<text x="313" y="141" textLength="4" lengthAdjust="spacingAndGlyphs">3</text><text x="390" y="141" textLength="4" lengthAdjust="spacingAndGlyphs">7</text><text x="468" y="141" textLength="8" lengthAdjust="spacingAndGlyphs">11</text><text x="545" y="141" textLength="8" lengthAdjust="spacingAndGlyphs">15</text><text x="623" y="141" textLength="8" lengthAdjust="spacingAndGlyphs">19</text><text x="700" y="141" textLength="8" lengthAdjust="spacingAndGlyphs">23</text><text x="778" y="141" textLength="8" lengthAdjust="spacingAndGlyphs">27</text><text x="855" y="141" textLength="8" lengthAdjust="spacingAndGlyphs">31</text><text x="933" y="141" textLength="8" lengthAdjust="spacingAndGlyphs">35</text><text x="1010" y="141" textLength="8" lengthAdjust="spacingAndGlyphs">39</text><text x="1088" y="141" textLength="8" lengthAdjust="spacingAndGlyphs">43</text><text x="1165" y="141" textLength="8" lengthAdjust="spacingAndGlyphs">47</text><text x="1243" y="141" textLength="8" lengthAdjust="spacingAndGlyphs">51</text><text x="1320" y="141" textLength="8" lengthAdjust="spacingAndGlyphs">55</text><text x="1398" y="141" textLength="8" lengthAdjust="spacingAndGlyphs">59</text><text x="1475" y="141" textLength="8" lengthAdjust="spacingAndGlyphs">63</text><text x="1553" y="141" textLength="8" lengthAdjust="spacingAndGlyphs">67</text><text x="1631" y="141" textLength="8" lengthAdjust="spacingAndGlyphs">71</text><text x="1708" y="141" textLength="8" lengthAdjust="spacingAndGlyphs">75</text><text x="1786" y="141" textLength="8" lengthAdjust="spacingAndGlyphs">79</text><text x="1864" y="141" textLength="8" lengthAdjust="spacingAndGlyphs">83</text>
</g>
<path d="M273 130h8l-8 7z" fill="#6fc6a0"/>

<!-- track headers -->
<use href="#th" y="147"/><use href="#th" y="185"/><use href="#th" y="223"/><use href="#th" y="261"/><use href="#th" y="299"/><use href="#th" y="337"/><use href="#th" y="375"/><use href="#th" y="413"/><use href="#th" y="451"/><use href="#th" y="489"/><use href="#th" y="527"/><use href="#th" y="565"/><use href="#th" y="603"/><use href="#th" y="641"/><use href="#th" y="679"/><use href="#th" y="717"/><use href="#th" y="755"/><use href="#th" y="793"/><use href="#th" y="831"/><use href="#th" y="869"/><use href="#th" y="907"/><use href="#th" y="945"/><use href="#th" y="983"/><use href="#th" y="1021"/>
<g class="tr">
<text x="164" y="160" textLength="38" lengthAdjust="spacingAndGlyphs">Track 1</text>
<text x="164" y="198" textLength="38" lengthAdjust="spacingAndGlyphs">Track 2</text>
<text x="164" y="236" textLength="38" lengthAdjust="spacingAndGlyphs">Track 3</text>
<text x="164" y="274" textLength="38" lengthAdjust="spacingAndGlyphs">Track 4</text>
<text x="164" y="312" textLength="38" lengthAdjust="spacingAndGlyphs">Track 5</text>
<text x="164" y="350" textLength="38" lengthAdjust="spacingAndGlyphs">Track 6</text>
<text x="164" y="388" textLength="38" lengthAdjust="spacingAndGlyphs">Track 7</text>
<text x="164" y="426" textLength="38" lengthAdjust="spacingAndGlyphs">Track 8</text>
<text x="164" y="464" textLength="38" lengthAdjust="spacingAndGlyphs">Track 9</text>
<text x="164" y="502" textLength="45" lengthAdjust="spacingAndGlyphs">Track 10</text>
<text x="164" y="540" textLength="45" lengthAdjust="spacingAndGlyphs">Track 11</text>
<text x="164" y="578" textLength="45" lengthAdjust="spacingAndGlyphs">Track 12</text>
<text x="164" y="616" textLength="45" lengthAdjust="spacingAndGlyphs">Track 13</text>
<text x="164" y="654" textLength="45" lengthAdjust="spacingAndGlyphs">Track 14</text>
<text x="164" y="692" textLength="45" lengthAdjust="spacingAndGlyphs">Track 15</text>
<text x="164" y="730" textLength="45" lengthAdjust="spacingAndGlyphs">Track 16</text>
<text x="164" y="768" textLength="45" lengthAdjust="spacingAndGlyphs">Track 17</text>
<text x="164" y="806" textLength="45" lengthAdjust="spacingAndGlyphs">Track 18</text>
<text x="164" y="844" textLength="45" lengthAdjust="spacingAndGlyphs">Track 19</text>
<text x="164" y="882" textLength="45" lengthAdjust="spacingAndGlyphs">Track 20</text>
<text x="164" y="920" textLength="45" lengthAdjust="spacingAndGlyphs">Track 21</text>
<text x="164" y="958" textLength="45" lengthAdjust="spacingAndGlyphs">Track 22</text>
<text x="164" y="996" textLength="45" style="fill:#8a7248" lengthAdjust="spacingAndGlyphs">Track 23</text>
<text x="164" y="1034" textLength="45" style="fill:#8a7248" lengthAdjust="spacingAndGlyphs">Track 24</text>
</g>
<rect x="263.500" y="908.500" width="8" height="34" fill="none" stroke="#62d0a2" stroke-width="1.200"/>

<!-- CLIPS -->
<g class="t">
<!-- T1 -->
<g transform="translate(0,147)">
<svg x="428.400" width="154.300" height="38"><use href="#c1"/><text x="14" y="11" textLength="60" lengthAdjust="spacingAndGlyphs">[AB] RIM (1)</text></svg>
<svg x="583.500" width="154.300" height="38"><use href="#c1"/><text x="14" y="11" textLength="60" lengthAdjust="spacingAndGlyphs">[AB] RIM (1)</text></svg>
<svg x="738.700" width="154.300" height="38"><use href="#c1"/><text x="14" y="11" textLength="60" lengthAdjust="spacingAndGlyphs">[AB] RIM (1)</text></svg>
<svg x="893.800" width="154.300" height="38"><use href="#c1"/><text x="14" y="11" textLength="60" lengthAdjust="spacingAndGlyphs">[AB] RIM (1)</text></svg>
<svg x="1068.300" width="135" height="38"><use href="#c1"/><text x="14" y="11" textLength="60" lengthAdjust="spacingAndGlyphs">[AB] RIM (1)</text></svg>
<svg x="1223.400" width="135" height="38"><use href="#c1"/><text x="14" y="11" textLength="60" lengthAdjust="spacingAndGlyphs">[AB] RIM (1)</text></svg>
<svg x="1359.100" width="145" height="38"><use href="#c1"/><text x="14" y="11" textLength="60" lengthAdjust="spacingAndGlyphs">[AB] RIM (1)</text></svg>
<svg x="1514.200" width="154.300" height="38"><use href="#c1"/><text x="14" y="11" textLength="60" lengthAdjust="spacingAndGlyphs">[AB] RIM (1)</text></svg>
<svg x="1669.300" width="154.500" height="38"><use href="#c1"/><text x="14" y="11" textLength="60" lengthAdjust="spacingAndGlyphs">[AB] RIM (1)</text></svg>
</g>
<!-- T2 -->
<g transform="translate(0,185)">
<svg x="738.700" width="154.300" height="38"><use href="#c2"/><text x="14" y="11" textLength="60" lengthAdjust="spacingAndGlyphs">[AB] RIM (3)</text></svg>
<svg x="893.800" width="154.300" height="38"><use href="#c2"/><text x="14" y="11" textLength="60" lengthAdjust="spacingAndGlyphs">[AB] RIM (3)</text></svg>
<svg x="1359.100" width="145" height="38"><use href="#c2"/><text x="14" y="11" textLength="60" lengthAdjust="spacingAndGlyphs">[AB] RIM (3)</text></svg>
<svg x="1514.200" width="154.300" height="38"><use href="#c2"/><text x="14" y="11" textLength="60" lengthAdjust="spacingAndGlyphs">[AB] RIM (3)</text></svg>
<svg x="1669.300" width="154.500" height="38"><use href="#c2"/><text x="14" y="11" textLength="60" lengthAdjust="spacingAndGlyphs">[AB] RIM (3)</text></svg>
</g>
<!-- T3 -->
<g transform="translate(0,223)">
<svg x="428.400" width="154.300" height="38"><use href="#c3"/><text x="14" y="11" textLength="63" lengthAdjust="spacingAndGlyphs">[AB] KICK (2)</text></svg>
<svg x="583.500" width="154.300" height="38"><use href="#c3"/><text x="14" y="11" textLength="63" lengthAdjust="spacingAndGlyphs">[AB] KICK (2)</text></svg>
<svg x="738.700" width="154.300" height="38"><use href="#c3"/><text x="14" y="11" textLength="63" lengthAdjust="spacingAndGlyphs">[AB] KICK (2)</text></svg>
<svg x="893.800" width="154.300" height="38"><use href="#c3"/><text x="14" y="11" textLength="63" lengthAdjust="spacingAndGlyphs">[AB] KICK (2)</text></svg>
<svg x="1068.300" width="135" height="38"><use href="#c3"/><text x="14" y="11" textLength="63" lengthAdjust="spacingAndGlyphs">[AB] KICK (2)</text></svg>
<svg x="1223.400" width="135" height="38"><use href="#c3"/><text x="14" y="11" textLength="63" lengthAdjust="spacingAndGlyphs">[AB] KICK (2)</text></svg>
<svg x="1359.100" width="145" height="38"><use href="#c3"/><text x="14" y="11" textLength="63" lengthAdjust="spacingAndGlyphs">[AB] KICK (2)</text></svg>
<svg x="1514.200" width="154.300" height="38"><use href="#c3"/><text x="14" y="11" textLength="63" lengthAdjust="spacingAndGlyphs">[AB] KICK (2)</text></svg>
<svg x="1669.300" width="154.500" height="38"><use href="#c3"/><text x="14" y="11" textLength="63" lengthAdjust="spacingAndGlyphs">[AB] KICK (2)</text></svg>
</g>
<!-- T4 -->
<g transform="translate(0,261)">
<svg x="273.300" width="154.500" height="38"><use href="#c4"/><text x="14" y="11" textLength="64" lengthAdjust="spacingAndGlyphs">ZENOLOGY #2</text></svg>
<svg x="738.700" width="154.300" height="38"><use href="#c4"/><text x="14" y="11" textLength="64" lengthAdjust="spacingAndGlyphs">ZENOLOGY #2</text></svg>
<svg x="893.800" width="154.300" height="38"><use href="#c4"/><text x="14" y="11" textLength="64" lengthAdjust="spacingAndGlyphs">ZENOLOGY #2</text></svg>
<svg x="1514.200" width="154.300" height="38"><use href="#c4"/><text x="14" y="11" textLength="64" lengthAdjust="spacingAndGlyphs">ZENOLOGY #2</text></svg>
<svg x="1669.300" width="154.500" height="38"><use href="#c4"/><text x="14" y="11" textLength="64" lengthAdjust="spacingAndGlyphs">ZENOLOGY #2</text></svg>
</g>
<!-- T5 -->
<g transform="translate(0,299)">
<svg x="273.300" width="154.500" height="38"><use href="#c5"/><text x="14" y="11" textLength="138" lengthAdjust="spacingAndGlyphs">ZENOLOGY #3 - ZENOLOGY #3</text></svg>
<svg x="428.400" width="154.500" height="38"><use href="#c5"/><text x="14" y="11" textLength="138" lengthAdjust="spacingAndGlyphs">ZENOLOGY #3 - ZENOLOGY #3</text></svg>
<svg x="583.500" width="154.500" height="38"><use href="#c5"/><text x="14" y="11" textLength="138" lengthAdjust="spacingAndGlyphs">ZENOLOGY #3 - ZENOLOGY #3</text></svg>
<svg x="738.700" width="154.500" height="38"><use href="#c5"/><text x="14" y="11" textLength="138" lengthAdjust="spacingAndGlyphs">ZENOLOGY #3 - ZENOLOGY #3</text></svg>
<svg x="893.800" width="154.500" height="38"><use href="#c5"/><text x="14" y="11" textLength="138" lengthAdjust="spacingAndGlyphs">ZENOLOGY #3 - ZENOLOGY #3</text></svg>
<svg x="1048.900" width="154.500" height="38"><use href="#c5"/><text x="14" y="11" textLength="138" lengthAdjust="spacingAndGlyphs">ZENOLOGY #3 - ZENOLOGY #3</text></svg>
<svg x="1204" width="154.500" height="38"><use href="#c5"/><text x="14" y="11" textLength="138" lengthAdjust="spacingAndGlyphs">ZENOLOGY #3 - ZENOLOGY #3</text></svg>
<svg x="1359.100" width="154.500" height="38"><use href="#c5"/><text x="14" y="11" textLength="138" lengthAdjust="spacingAndGlyphs">ZENOLOGY #3 - ZENOLOGY #3</text></svg>
<svg x="1514.200" width="154.500" height="38"><use href="#c5"/><text x="14" y="11" textLength="138" lengthAdjust="spacingAndGlyphs">ZENOLOGY #3 - ZENOLOGY #3</text></svg>
<svg x="1669.300" width="154.500" height="38"><use href="#c5"/><text x="14" y="11" textLength="138" lengthAdjust="spacingAndGlyphs">ZENOLOGY #3 - ZENOLOGY #3</text></svg>
</g>
<!-- T6 -->
<g transform="translate(0,337)">
<svg x="273.300" width="154.500" height="38"><use href="#c5"/><text x="14" y="11" textLength="138" lengthAdjust="spacingAndGlyphs">ZENOLOGY #3 -..ge Lizard EP-4</text></svg>
<svg x="428.400" width="154.500" height="38"><use href="#c5"/><text x="14" y="11" textLength="138" lengthAdjust="spacingAndGlyphs">ZENOLOGY #3 -..ge Lizard EP-4</text></svg>
<svg x="583.500" width="154.500" height="38"><use href="#c5"/><text x="14" y="11" textLength="138" lengthAdjust="spacingAndGlyphs">ZENOLOGY #3 -..ge Lizard EP-4</text></svg>
<svg x="738.700" width="154.500" height="38"><use href="#c5"/><text x="14" y="11" textLength="138" lengthAdjust="spacingAndGlyphs">ZENOLOGY #3 -..ge Lizard EP-4</text></svg>
<svg x="1048.900" width="154.500" height="38"><use href="#c5"/><text x="14" y="11" textLength="138" lengthAdjust="spacingAndGlyphs">ZENOLOGY #3 -..ge Lizard EP-4</text></svg>
<svg x="1204" width="154.500" height="38"><use href="#c5"/><text x="14" y="11" textLength="138" lengthAdjust="spacingAndGlyphs">ZENOLOGY #3 -..ge Lizard EP-4</text></svg>
<svg x="1359.100" width="154.500" height="38"><use href="#c5"/><text x="14" y="11" textLength="138" lengthAdjust="spacingAndGlyphs">ZENOLOGY #3 -..ge Lizard EP-4</text></svg>
<svg x="1514.200" width="154.500" height="38"><use href="#c5"/><text x="14" y="11" textLength="138" lengthAdjust="spacingAndGlyphs">ZENOLOGY #3 -..ge Lizard EP-4</text></svg>
<svg x="1669.300" width="154.500" height="38"><use href="#c5"/><text x="14" y="11" textLength="138" lengthAdjust="spacingAndGlyphs">ZENOLOGY #3 -..ge Lizard EP-4</text></svg>
</g>
<!-- T7 -->
<g transform="translate(0,375)">
<svg x="273.300" width="154.500" height="38"><use href="#c5"/><text x="14" y="11" textLength="138" lengthAdjust="spacingAndGlyphs">ZENOLOGY #3 - Analog Lab V</text></svg>
<svg x="738.700" width="154.500" height="38"><use href="#c5"/><text x="14" y="11" textLength="138" lengthAdjust="spacingAndGlyphs">ZENOLOGY #3 - Analog Lab V</text></svg>
<svg x="1048.900" width="154.500" height="38"><use href="#c5"/><text x="14" y="11" textLength="138" lengthAdjust="spacingAndGlyphs">ZENOLOGY #3 - Analog Lab V</text></svg>
<svg x="1514.200" width="154.500" height="38"><use href="#c5"/><text x="14" y="11" textLength="138" lengthAdjust="spacingAndGlyphs">ZENOLOGY #3 - Analog Lab V</text></svg>
<svg x="1669.300" width="154.500" height="38"><use href="#c5"/><text x="14" y="11" textLength="138" lengthAdjust="spacingAndGlyphs">ZENOLOGY #3 - Analog Lab V</text></svg>
</g>
<!-- T8 -->
<g transform="translate(0,413)">
<svg x="273.300" width="154.500" height="38"><use href="#c5"/><text x="14" y="11" textLength="138" lengthAdjust="spacingAndGlyphs">ZENOLOGY #3 - Analog Lab V #2</text></svg>
<svg x="428.400" width="154.500" height="38"><use href="#c5"/><text x="14" y="11" textLength="138" lengthAdjust="spacingAndGlyphs">ZENOLOGY #3 - Analog Lab V #2</text></svg>
<svg x="583.500" width="154.500" height="38"><use href="#c5"/><text x="14" y="11" textLength="138" lengthAdjust="spacingAndGlyphs">ZENOLOGY #3 - Analog Lab V #2</text></svg>
<svg x="738.700" width="154.500" height="38"><use href="#c5"/><text x="14" y="11" textLength="138" lengthAdjust="spacingAndGlyphs">ZENOLOGY #3 - Analog Lab V #2</text></svg>
<svg x="893.800" width="154.500" height="38"><use href="#c5"/><text x="14" y="11" textLength="138" lengthAdjust="spacingAndGlyphs">ZENOLOGY #3 - Analog Lab V #2</text></svg>
<svg x="1048.900" width="154.500" height="38"><use href="#c5"/><text x="14" y="11" textLength="138" lengthAdjust="spacingAndGlyphs">ZENOLOGY #3 - Analog Lab V #2</text></svg>
<svg x="1204" width="154.500" height="38"><use href="#c5"/><text x="14" y="11" textLength="138" lengthAdjust="spacingAndGlyphs">ZENOLOGY #3 - Analog Lab V #2</text></svg>
<svg x="1359.100" width="154.500" height="38"><use href="#c5"/><text x="14" y="11" textLength="138" lengthAdjust="spacingAndGlyphs">ZENOLOGY #3 - Analog Lab V #2</text></svg>
<svg x="1514.200" width="154.500" height="38"><use href="#c5"/><text x="14" y="11" textLength="138" lengthAdjust="spacingAndGlyphs">ZENOLOGY #3 - Analog Lab V #2</text></svg>
<svg x="1669.300" width="154.500" height="38"><use href="#c5"/><text x="14" y="11" textLength="138" lengthAdjust="spacingAndGlyphs">ZENOLOGY #3 - Analog Lab V #2</text></svg>
</g>
<!-- T9 -->
<g transform="translate(0,451)">
<svg x="273.300" width="154.500" height="38"><use href="#c9"/><text x="14" y="11" textLength="48" lengthAdjust="spacingAndGlyphs">Arcade #2</text></svg>
<svg x="506" width="77" height="38"><use href="#c9"/><text x="14" y="11" textLength="48" lengthAdjust="spacingAndGlyphs">Arcade #2</text></svg>
<svg x="583.500" width="154.500" height="38"><use href="#c9"/><text x="14" y="11" textLength="48" lengthAdjust="spacingAndGlyphs">Arcade #2</text></svg>
<svg x="738.700" width="154.500" height="38"><use href="#c9"/><text x="14" y="11" textLength="48" lengthAdjust="spacingAndGlyphs">Arcade #2</text></svg>
<svg x="893.800" width="154.500" height="38"><use href="#c9"/><text x="14" y="11" textLength="48" lengthAdjust="spacingAndGlyphs">Arcade #2</text></svg>
<svg x="1048.900" width="154.500" height="38"><use href="#c9"/><text x="14" y="11" textLength="48" lengthAdjust="spacingAndGlyphs">Arcade #2</text></svg>
<svg x="1281.600" width="77" height="38"><use href="#c9"/><text x="14" y="11" textLength="48" lengthAdjust="spacingAndGlyphs">Arcade #2</text></svg>
<svg x="1359.100" width="154.500" height="38"><use href="#c9"/><text x="14" y="11" textLength="48" lengthAdjust="spacingAndGlyphs">Arcade #2</text></svg>
<svg x="1514.200" width="154.500" height="38"><use href="#c9"/><text x="14" y="11" textLength="48" lengthAdjust="spacingAndGlyphs">Arcade #2</text></svg>
<svg x="1669.300" width="154.500" height="38"><use href="#c9"/><text x="14" y="11" textLength="48" lengthAdjust="spacingAndGlyphs">Arcade #2</text></svg>
</g>
<!-- T10 -->
<g transform="translate(0,489)">
<svg x="506" width="75" height="38"><use href="#c6"/><text x="14" y="11" textLength="56" lengthAdjust="spacingAndGlyphs">ZENO..GY #6</text></svg>
<svg x="583.500" width="74" height="38"><use href="#c6"/><text x="14" y="11" textLength="56" lengthAdjust="spacingAndGlyphs">ZENO..GY #6</text></svg>
<svg x="661" width="73" height="38"><use href="#c6"/><text x="14" y="11" textLength="56" lengthAdjust="spacingAndGlyphs">ZENO..GY #6</text></svg>
<svg x="738.700" width="151" height="38"><use href="#c6"/><text x="14" y="11" textLength="64" lengthAdjust="spacingAndGlyphs">ZENOLOGY #6</text></svg>
<svg x="893.800" width="72" height="38"><use href="#c6"/><text x="14" y="11" textLength="56" lengthAdjust="spacingAndGlyphs">ZENO..GY #6</text></svg>
<svg x="971.700" width="72" height="38"><use href="#c6"/><text x="14" y="11" textLength="56" lengthAdjust="spacingAndGlyphs">ZENO..GY #6</text></svg>
<svg x="1049.300" width="16" height="38"><use href="#c6"/></svg>
<svg x="1068" width="16.700" height="38"><use href="#cs"/><use href="#n6" x="-19.400"/></svg>
<svg x="1087.700" width="32.300" height="38"><use href="#cs"/><use href="#n6" x="-38.800"/><text x="14" y="11" style="fill:#7a7e86" textLength="14" lengthAdjust="spacingAndGlyphs">Z..6</text></svg>
<svg x="1126.700" width="36" height="38"><use href="#cs"/><use href="#n6"/><text x="14" y="11" style="fill:#a8acb2" textLength="14" lengthAdjust="spacingAndGlyphs">Z..6</text></svg>
<svg x="1165.700" width="36" height="38"><use href="#cs"/><use href="#n6" x="-38.800"/><text x="14" y="11" style="fill:#7a7e86" textLength="14" lengthAdjust="spacingAndGlyphs">Z..6</text></svg>
<svg x="1281.600" width="75" height="38"><use href="#c6"/><text x="14" y="11" textLength="56" lengthAdjust="spacingAndGlyphs">ZENO..GY #6</text></svg>
<svg x="1359.100" width="75" height="38"><use href="#c6"/><text x="14" y="11" textLength="61" lengthAdjust="spacingAndGlyphs">ZENOLOGY #6</text></svg>
<svg x="1437" width="75" height="38"><use href="#c6"/><text x="14" y="11" textLength="61" lengthAdjust="spacingAndGlyphs">ZENOLOGY #6</text></svg>
<svg x="1514.200" width="151" height="38"><use href="#c6"/><text x="14" y="11" textLength="64" lengthAdjust="spacingAndGlyphs">ZENOLOGY #6</text></svg>
<svg x="1669.300" width="17" height="38"><use href="#c6"/></svg>
<svg x="1690" width="16" height="38"><use href="#cs"/><use href="#n6" x="-19.400"/></svg>
<svg x="1708.500" width="34" height="38"><use href="#cs"/><use href="#n6" x="-38.800"/></svg>
<svg x="1748" width="16" height="38"><use href="#c6"/></svg>
<svg x="1766" width="16" height="38"><use href="#cs"/><use href="#n6" x="-19.400"/></svg>
<svg x="1786" width="38" height="38"><use href="#cs"/><use href="#n6" x="-38.800"/><text x="14" y="11" textLength="20" lengthAdjust="spacingAndGlyphs">ZE..6</text></svg>
</g>
<!-- T11 -->
<g transform="translate(0,527)">
<svg x="273.300" width="154.500" height="38"><use href="#c11"/><text x="14" y="11" textLength="33" lengthAdjust="spacingAndGlyphs">Arcade</text></svg>
<svg x="428.400" width="154.500" height="38"><use href="#c11"/><text x="14" y="11" textLength="33" lengthAdjust="spacingAndGlyphs">Arcade</text></svg>
<svg x="583.500" width="154.500" height="38"><use href="#c11"/><text x="14" y="11" textLength="33" lengthAdjust="spacingAndGlyphs">Arcade</text></svg>
<svg x="738.700" width="154.500" height="38"><use href="#c11"/><text x="14" y="11" textLength="33" lengthAdjust="spacingAndGlyphs">Arcade</text></svg>
<svg x="893.800" width="154.500" height="38"><use href="#c11"/><text x="14" y="11" textLength="33" lengthAdjust="spacingAndGlyphs">Arcade</text></svg>
<svg x="1048.900" width="154.500" height="38"><use href="#c11"/><text x="14" y="11" textLength="33" lengthAdjust="spacingAndGlyphs">Arcade</text></svg>
<svg x="1204" width="154.500" height="38"><use href="#c11"/><text x="14" y="11" textLength="33" lengthAdjust="spacingAndGlyphs">Arcade</text></svg>
<svg x="1359.100" width="154.500" height="38"><use href="#c11"/><text x="14" y="11" textLength="33" lengthAdjust="spacingAndGlyphs">Arcade</text></svg>
<svg x="1514.200" width="154.500" height="38"><use href="#c11"/><text x="14" y="11" textLength="33" lengthAdjust="spacingAndGlyphs">Arcade</text></svg>
<svg x="1669.300" width="154.500" height="38"><use href="#c11"/><text x="14" y="11" textLength="33" lengthAdjust="spacingAndGlyphs">Arcade</text></svg>
</g>
<!-- T12 -->
<g transform="translate(0,565)">
<svg x="273.300" width="154.500" height="38"><use href="#c12"/><text x="14" y="11" class="o" textLength="51" lengthAdjust="spacingAndGlyphs">Pattern 12</text></svg>
<svg x="738.700" width="154.500" height="38"><use href="#c12"/><text x="14" y="11" class="o" textLength="51" lengthAdjust="spacingAndGlyphs">Pattern 12</text></svg>
<svg x="1514.200" width="154.500" height="38"><use href="#c12"/><text x="14" y="11" class="o" textLength="51" lengthAdjust="spacingAndGlyphs">Pattern 12</text></svg>
</g>
<!-- T13 -->
<g transform="translate(0,603)">
<use href="#w13" x="273.300"/><use href="#w13" x="312.100"/><use href="#w13" x="350.900"/><use href="#w13" x="389.600"/><use href="#w13" x="428.400"/><use href="#w13" x="467.200"/><use href="#w13" x="506"/><use href="#w13" x="544.800"/><use href="#w13" x="583.500"/><use href="#w13" x="622.300"/><use href="#w13" x="661.100"/><use href="#w13" x="699.900"/>
<use href="#w13b" x="292.300"/><use href="#w13b" x="331.100"/><use href="#w13b" x="369.900"/><use href="#w13b" x="408.600"/><use href="#w13b" x="447.400"/><use href="#w13b" x="486.200"/><use href="#w13b" x="525"/><use href="#w13b" x="563.800"/><use href="#w13b" x="602.500"/><use href="#w13b" x="641.300"/><use href="#w13b" x="680.100"/>
<svg x="718" width="11" height="37"><use href="#w13b" opacity=".65"/></svg>
<use href="#w13" x="738.700"/><use href="#w13" x="777.500"/><use href="#w13" x="816.200"/><use href="#w13" x="855"/><use href="#w13" x="893.800"/><use href="#w13" x="932.600"/><use href="#w13" x="971.400"/><use href="#w13" x="1010.100"/><use href="#w13" x="1048.900"/><use href="#w13" x="1087.700"/><use href="#w13" x="1126.500"/><use href="#w13" x="1165.300"/><use href="#w13" x="1204"/><use href="#w13" x="1242.800"/><use href="#w13" x="1281.600"/><use href="#w13" x="1320.400"/><use href="#w13" x="1359.200"/><use href="#w13" x="1397.900"/><use href="#w13" x="1436.700"/><use href="#w13" x="1475.500"/><use href="#w13" x="1514.300"/><use href="#w13" x="1553.100"/><use href="#w13" x="1591.800"/><use href="#w13" x="1630.600"/><use href="#w13" x="1669.400"/><use href="#w13" x="1708.200"/><use href="#w13" x="1747"/><use href="#w13" x="1785.700"/>
<use href="#w13b" x="757.700"/><use href="#w13b" x="796.500"/><use href="#w13b" x="835.200"/><use href="#w13b" x="874"/><use href="#w13b" x="912.800"/><use href="#w13b" x="951.600"/><use href="#w13b" x="990.400"/><use href="#w13b" x="1029.100"/><use href="#w13b" x="1067.900"/><use href="#w13b" x="1106.700"/><use href="#w13b" x="1145.500"/><use href="#w13b" x="1184.300"/><use href="#w13b" x="1223"/><use href="#w13b" x="1261.800"/><use href="#w13b" x="1300.600"/><use href="#w13b" x="1339.400"/><use href="#w13b" x="1378.200"/><use href="#w13b" x="1416.900"/><use href="#w13b" x="1455.700"/><use href="#w13b" x="1494.500"/><use href="#w13b" x="1533.300"/><use href="#w13b" x="1572.100"/><use href="#w13b" x="1610.800"/><use href="#w13b" x="1649.600"/><use href="#w13b" x="1688.400"/><use href="#w13b" x="1727.200"/><use href="#w13b" x="1766"/><use href="#w13b" x="1804.700"/>
</g>
<!-- T14 -->
<g transform="translate(0,641)">
<svg x="409.300" width="38.500" height="38"><use href="#c14"/><text x="13.700" y="11" class="p" textLength="23" lengthAdjust="spacingAndGlyphs">Af..2</text></svg>
<svg x="719.300" width="38.500" height="38"><use href="#c14"/><text x="13.700" y="11" class="p" textLength="23" lengthAdjust="spacingAndGlyphs">Af..2</text></svg>
<svg x="874.300" width="38.500" height="38"><use href="#c14"/><text x="13.700" y="11" class="p" textLength="23" lengthAdjust="spacingAndGlyphs">Af..2</text></svg>
<svg x="1184.700" width="38.500" height="38"><use href="#c14"/><text x="13.700" y="11" class="p" textLength="23" lengthAdjust="spacingAndGlyphs">Af..2</text></svg>
<svg x="1495.600" width="38.500" height="38"><use href="#c14"/><text x="13.700" y="11" class="p" textLength="23" lengthAdjust="spacingAndGlyphs">Af..2</text></svg>
<svg x="1651" width="38.500" height="38"><use href="#c14"/><text x="13.700" y="11" class="p" textLength="23" lengthAdjust="spacingAndGlyphs">Af..2</text></svg>
</g>
<!-- T15 -->
<g transform="translate(0,679)">
<svg x="721.300" width="35.500" height="38"><use href="#c15"/><text x="13.700" y="11" class="d" textLength="19" lengthAdjust="spacingAndGlyphs">A..1</text></svg>
<svg x="1032.300" width="35.500" height="38"><use href="#c15"/><text x="13.700" y="11" class="d" textLength="19" lengthAdjust="spacingAndGlyphs">A..1</text></svg>
<svg x="1497" width="35.500" height="38"><use href="#c15"/><text x="13.700" y="11" class="d" textLength="19" lengthAdjust="spacingAndGlyphs">A..1</text></svg>
</g>
<!-- T16 -->
<g transform="translate(0,717)"><use href="#c16" x="719.300"/><use href="#c16" x="874.300"/><use href="#c16" x="1495.600"/><use href="#c16" x="1651"/></g>
<!-- T17 -->
<g transform="translate(0,755)">
<svg x="278.300" width="71.700" height="38"><use href="#c17"/><path d="M40 24h6v4h-6zM55 25h5v2h-5z" fill="#a8aeb4"/><text x="14" y="11" style="fill:#b8c0c8" textLength="56" lengthAdjust="spacingAndGlyphs">PP_El..6bpm</text></svg>
<svg x="351.700" width="37" height="38"><use href="#c17"/><text x="15" y="11" style="fill:#a8b2bc" textLength="21" lengthAdjust="spacingAndGlyphs">P..m</text></svg>
<svg x="390.300" width="37.400" height="38"><use href="#c17"/><text x="15" y="11" style="fill:#a8b2bc" textLength="21" lengthAdjust="spacingAndGlyphs">P..m</text></svg>
<svg x="587" width="17" height="38"><use href="#c17s"/></svg>
<svg x="622" width="18" height="38"><use href="#c17s"/></svg>
<svg x="666" width="14" height="38"><use href="#c17s"/></svg>
<svg x="743.300" width="38.400" height="38"><use href="#c17"/><text x="15" y="11" style="fill:#a8b2bc" textLength="21" lengthAdjust="spacingAndGlyphs">P..m</text></svg>
<svg x="782.700" width="37.300" height="38"><use href="#c17"/><text x="15" y="11" style="fill:#a8b2bc" textLength="21" lengthAdjust="spacingAndGlyphs">P..m</text></svg>
<svg x="821.700" width="37.600" height="38"><use href="#c17"/><text x="15" y="11" style="fill:#a8b2bc" textLength="21" lengthAdjust="spacingAndGlyphs">P..m</text></svg>
<svg x="860.700" width="36.600" height="38"><use href="#c17"/><text x="15" y="11" style="fill:#a8b2bc" textLength="21" lengthAdjust="spacingAndGlyphs">P..m</text></svg>
<svg x="1364.600" width="13.400" height="38"><use href="#c17s"/></svg>
<svg x="1399" width="18" height="38"><use href="#c17s"/></svg>
<svg x="1441.700" width="13.300" height="38"><use href="#c17s"/></svg>
<svg x="1519.300" width="38" height="38"><use href="#c17"/><text x="15" y="11" style="fill:#a8b2bc" textLength="21" lengthAdjust="spacingAndGlyphs">P..m</text></svg>
<svg x="1558.700" width="36.300" height="38"><use href="#c17"/><text x="15" y="11" style="fill:#a8b2bc" textLength="21" lengthAdjust="spacingAndGlyphs">P..m</text></svg>
<svg x="1596.700" width="37.600" height="38"><use href="#c17"/><text x="15" y="11" style="fill:#a8b2bc" textLength="21" lengthAdjust="spacingAndGlyphs">P..m</text></svg>
<svg x="1635.700" width="37.600" height="38"><use href="#c17"/><text x="15" y="11" style="fill:#a8b2bc" textLength="21" lengthAdjust="spacingAndGlyphs">P..m</text></svg>
<svg x="1675" width="37.300" height="38"><use href="#c17"/><text x="15" y="11" style="fill:#a8b2bc" textLength="21" lengthAdjust="spacingAndGlyphs">P..m</text></svg>
<svg x="1714" width="36" height="38"><use href="#c17"/><text x="15" y="11" style="fill:#a8b2bc" textLength="21" lengthAdjust="spacingAndGlyphs">P..m</text></svg>
<svg x="1752" width="37.300" height="38"><use href="#c17"/><text x="15" y="11" style="fill:#a8b2bc" textLength="21" lengthAdjust="spacingAndGlyphs">P..m</text></svg>
<svg x="1791" width="32.500" height="38"><use href="#c17"/><text x="15" y="11" style="fill:#7e8a94" textLength="8" lengthAdjust="spacingAndGlyphs">P.</text></svg>
</g>
<!-- T18 -->
<g transform="translate(0,793)">
<svg x="273.300" width="154.500" height="38"><use href="#c18"/><text x="14" y="11" class="p" textLength="114" lengthAdjust="spacingAndGlyphs">texture - chinese shop</text></svg>
<svg x="428.400" width="154.500" height="38"><use href="#c18"/><text x="14" y="11" class="p" textLength="114" lengthAdjust="spacingAndGlyphs">texture - chinese shop</text></svg>
<svg x="583.500" width="154.500" height="38"><use href="#c18"/><text x="14" y="11" class="p" textLength="114" lengthAdjust="spacingAndGlyphs">texture - chinese shop</text></svg>
<svg x="738.700" width="154.500" height="38"><use href="#c18"/><text x="14" y="11" class="p" textLength="114" lengthAdjust="spacingAndGlyphs">texture - chinese shop</text></svg>
<svg x="893.800" width="154.500" height="38"><use href="#c18"/><text x="14" y="11" class="p" textLength="114" lengthAdjust="spacingAndGlyphs">texture - chinese shop</text></svg>
<svg x="1048.900" width="154.500" height="38"><use href="#c18"/><text x="14" y="11" class="p" textLength="114" lengthAdjust="spacingAndGlyphs">texture - chinese shop</text></svg>
<svg x="1204" width="154.500" height="38"><use href="#c18"/><text x="14" y="11" class="p" textLength="114" lengthAdjust="spacingAndGlyphs">texture - chinese shop</text></svg>
<svg x="1359.100" width="154.500" height="38"><use href="#c18"/><text x="14" y="11" class="p" textLength="114" lengthAdjust="spacingAndGlyphs">texture - chinese shop</text></svg>
<svg x="1514.200" width="154.500" height="38"><use href="#c18"/><text x="14" y="11" class="p" textLength="114" lengthAdjust="spacingAndGlyphs">texture - chinese shop</text></svg>
<svg x="1669.300" width="154.500" height="38"><use href="#c18"/><text x="14" y="11" class="p" textLength="114" lengthAdjust="spacingAndGlyphs">texture - chinese shop</text></svg>
</g>
<!-- T19 -->
<g transform="translate(0,831)">
<svg x="738.700" width="154.500" height="38"><use href="#c19"/><text x="14" y="11" class="y" textLength="41" lengthAdjust="spacingAndGlyphs">02 (110)</text></svg>
<svg x="1514.200" width="154.500" height="38"><use href="#c19"/><text x="14" y="11" class="y" textLength="41" lengthAdjust="spacingAndGlyphs">02 (110)</text></svg>
<svg x="1669.300" width="154.500" height="38"><use href="#c19"/><text x="14" y="11" class="y" textLength="41" lengthAdjust="spacingAndGlyphs">02 (110)</text></svg>
</g>
<!-- T20 -->
<g transform="translate(0,869)"><use href="#c20" x="428.400"/><use href="#c20" x="738.700"/><use href="#c20" x="893.800"/><use href="#c20" x="1204"/><use href="#c20" x="1514.200"/><use href="#c20" x="1669.300"/></g>
<!-- T21 -->
<svg x="273.300" y="907" width="77" height="38"><use href="#b"/><rect y=".3" width="77" height="14.700" rx="2" fill="#55516c"/><use href="#ai"/><text x="14" y="11" class="p" textLength="17" lengthAdjust="spacingAndGlyphs">Wet</text><path d="M0 26H77M0 37H13Q16 37 17 31" fill="none" stroke="#c8c8d4"/><path d="M14 26L16 20L20 19L22 21L25 17L29 18L31 24L31 29L29 33L25 35L22 31L19 33L16 30ZM33 24h3v4h-3zM38 24.500h3v3h-3zM43 25h3v2h-3zM48 25h3v2h-3z" fill="#b0b2c6"/></svg>
<!-- T22 -->
<svg x="1669.300" y="945" width="154.500" height="38"><use href="#b"/><path d="M0 21Q70 22 155 36V37H0Z" fill="#50391e"/><path d="M0 20.500Q70 22 155 36" fill="none" stroke="#a4dcd6" stroke-width="1.200"/><rect y=".3" width="154.500" height="14.700" rx="2" fill="#4a7a78"/><circle cx="3.500" cy="11" r="1.500" fill="none" stroke="#e0f0ee"/><circle cx="10.500" cy="4" r="1.500" fill="none" stroke="#e0f0ee"/><path d="M4.500 10l5-5" stroke="#e0f0ee"/><text x="14" y="11" style="fill:#d4e6e4" textLength="82" lengthAdjust="spacingAndGlyphs">Master - Volume</text></svg>
</g>

<!-- scrollbar -->
<rect x="1899" y="127" width="20" height="901" fill="url(#tex)"/>
<rect x="1900" y="127.500" width="19" height="19" fill="#4a3820" stroke="#5a4728"/>
<path d="M1904.500 139l5-5 5 5" fill="none" stroke="#8a7552" stroke-width="1.300"/>
<rect x="1900" y="147.500" width="19" height="32" fill="#50391f" stroke="#63502f"/>
<rect x="1900.700" y="1011.700" width="18.300" height="16.300" fill="#4a3820" stroke="#5a4728"/>
<path d="M1904.500 1018l5 5 5-5" fill="none" stroke="#8a7552" stroke-width="1.300"/>
</svg>
</body></html>
